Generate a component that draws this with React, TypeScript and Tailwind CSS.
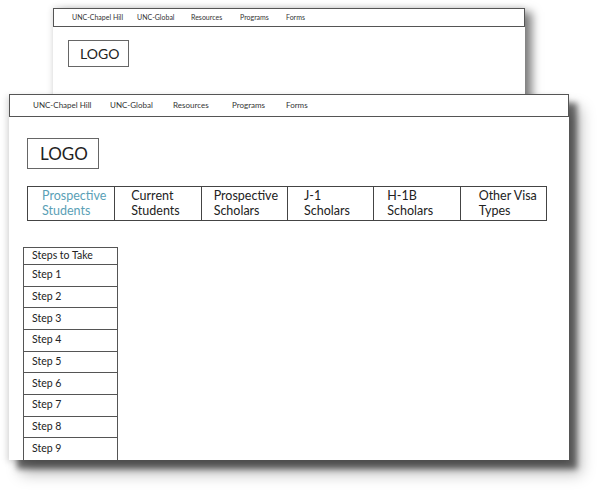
const backNav = ['UNC-Chapel Hill', 'UNC-Global', 'Resources', 'Programs', 'Forms']
const tabs = [
  ['Prospective', 'Students'],
  ['Current', 'Students'],
  ['Prospective', 'Scholars'],
  ['J-1', 'Scholars'],
  ['H-1B', 'Scholars'],
  ['Other Visa', 'Types'],
]
const steps = ['Step 1', 'Step 2', 'Step 3', 'Step 4', 'Step 5', 'Step 6', 'Step 7', 'Step 8', 'Step 9']

function App() {
  return (
    <div className="relative h-[494px] w-[601px] overflow-hidden bg-white font-['Lato',sans-serif] text-[#222]">
      {/* back window */}
      <div className="absolute left-[53px] top-[8px] h-[110px] w-[472px] bg-white shadow-[7px_4px_9px_rgba(0,0,0,0.5),-1px_-1px_6px_rgba(0,0,0,0.1)]">
        <div className="flex h-[19px] items-center border border-[#555] pl-[18px] text-[7px] text-[#333]">
          <span className="w-[65px]">UNC-Chapel Hill</span>
          <span className="w-[54px]">UNC-Global</span>
          <span className="w-[49px]">Resources</span>
          <span className="w-[46px]">Programs</span>
          <span>Forms</span>
        </div>
        <div className="ml-[15px] mt-[13px] flex h-[27px] w-[61px] items-center border border-[#666] pl-[11px] text-[14px] leading-none">
          LOGO
        </div>
      </div>

      {/* front window */}
      <div className="absolute left-[9px] top-[94px] flex h-[366px] w-[560px] flex-col bg-white shadow-[8px_9px_6px_rgba(0,0,0,0.55),12px_14px_14px_rgba(0,0,0,0.25),-2px_2px_6px_rgba(0,0,0,0.15)]">
        <div className="flex h-[23px] items-center border border-[#555] pl-[23px] text-[8px] text-[#333]">
          {backNav.map((n, i) => (
            <span key={n} className={i === 0 ? 'w-[77px]' : i === 1 ? 'w-[63px]' : i === 2 ? 'w-[59px]' : i === 3 ? 'w-[54px]' : ''}>
              {n}
            </span>
          ))}
        </div>

        <div className="ml-[18px] mt-[21px] flex h-[32px] w-[72px] items-center border border-[#666] pl-[12px] text-[17px] leading-none">
          LOGO
        </div>

        <div className="ml-[18px] mt-[17px] grid h-[35px] w-[520px] grid-cols-6 border-[1.5px] border-[#444]">
          {tabs.map((t, i) => (
            <div
              key={i}
              className={`flex flex-col pt-[1px] text-[12.5px] leading-[15px] ${i > 0 ? 'border-l-[1.5px] border-[#444]' : ''} ${
                i === 0 ? 'pl-[14px] text-[#5a9fb6]' : i === 2 ? 'pl-[12px]' : i === 4 ? 'pl-[13px]' : i === 5 ? 'pl-[18px]' : 'pl-[16px]'
              }`}
            >
              <span>{t[0]}</span>
              <span>{t[1]}</span>
            </div>
          ))}
        </div>

        <div className="ml-[14px] mt-[26px] flex w-[95px] flex-1 flex-col border border-b-0 border-[#555] text-[10.5px]">
          <div className="flex h-[17px] items-center border-b border-[#555] pl-[8px]">Steps to Take</div>
          {steps.map((s) => (
            <div key={s} className="flex h-[21.7px] items-center border-b border-[#555] pl-[8px] last:border-b-0">
              {s}
            </div>
          ))}
        </div>
      </div>
    </div>
  )
}

export default App
